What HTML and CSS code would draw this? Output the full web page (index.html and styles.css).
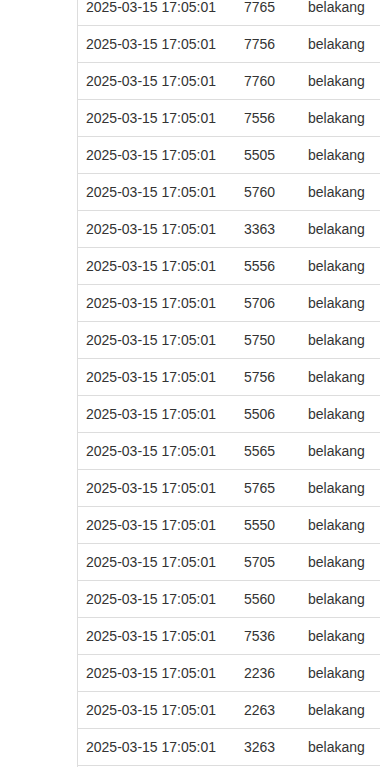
FILE: index.html
```html
<!DOCTYPE html>
<html>
<head>
<meta charset="utf-8">
<link rel="stylesheet" href="styles.css">
</head>
<body>
<div class="wrap">
<table class="log">
<colgroup><col class="c-time"><col class="c-num"><col class="c-pos"></colgroup>
<tbody>
<tr><td>2025-03-15 17:05:01</td><td>7765</td><td>belakang</td></tr>
<tr><td>2025-03-15 17:05:01</td><td>7756</td><td>belakang</td></tr>
<tr><td>2025-03-15 17:05:01</td><td>7760</td><td>belakang</td></tr>
<tr><td>2025-03-15 17:05:01</td><td>7556</td><td>belakang</td></tr>
<tr><td>2025-03-15 17:05:01</td><td>5505</td><td>belakang</td></tr>
<tr><td>2025-03-15 17:05:01</td><td>5760</td><td>belakang</td></tr>
<tr><td>2025-03-15 17:05:01</td><td>3363</td><td>belakang</td></tr>
<tr><td>2025-03-15 17:05:01</td><td>5556</td><td>belakang</td></tr>
<tr><td>2025-03-15 17:05:01</td><td>5706</td><td>belakang</td></tr>
<tr><td>2025-03-15 17:05:01</td><td>5750</td><td>belakang</td></tr>
<tr><td>2025-03-15 17:05:01</td><td>5756</td><td>belakang</td></tr>
<tr><td>2025-03-15 17:05:01</td><td>5506</td><td>belakang</td></tr>
<tr><td>2025-03-15 17:05:01</td><td>5565</td><td>belakang</td></tr>
<tr><td>2025-03-15 17:05:01</td><td>5765</td><td>belakang</td></tr>
<tr><td>2025-03-15 17:05:01</td><td>5550</td><td>belakang</td></tr>
<tr><td>2025-03-15 17:05:01</td><td>5705</td><td>belakang</td></tr>
<tr><td>2025-03-15 17:05:01</td><td>5560</td><td>belakang</td></tr>
<tr><td>2025-03-15 17:05:01</td><td>7536</td><td>belakang</td></tr>
<tr><td>2025-03-15 17:05:01</td><td>2236</td><td>belakang</td></tr>
<tr><td>2025-03-15 17:05:01</td><td>2263</td><td>belakang</td></tr>
<tr><td>2025-03-15 17:05:01</td><td>3263</td><td>belakang</td></tr>
</tbody>
</table>
</div>
</body>
</html>
```

FILE: styles.css
```css
html, body {
  margin: 0;
  padding: 0;
  background: #fff;
  overflow: hidden;
}
body {
  font-family: "Liberation Sans", Arial, sans-serif;
  font-size: 14px;
  line-height: 20px;
  color: #333;
}
.wrap {
  margin-left: 77px;
  margin-top: -11px;
  border-left: 1px solid #ddd;
  width: 303px;
  min-height: 800px;
}
.log {
  border-collapse: collapse;
  table-layout: fixed;
  width: 302px;
}
.c-time { width: 158px; }
.c-num { width: 64px; }
.log td {
  padding: 8px;
  border-bottom: 1px solid #ddd;
  white-space: nowrap;
  vertical-align: top;
}
```
